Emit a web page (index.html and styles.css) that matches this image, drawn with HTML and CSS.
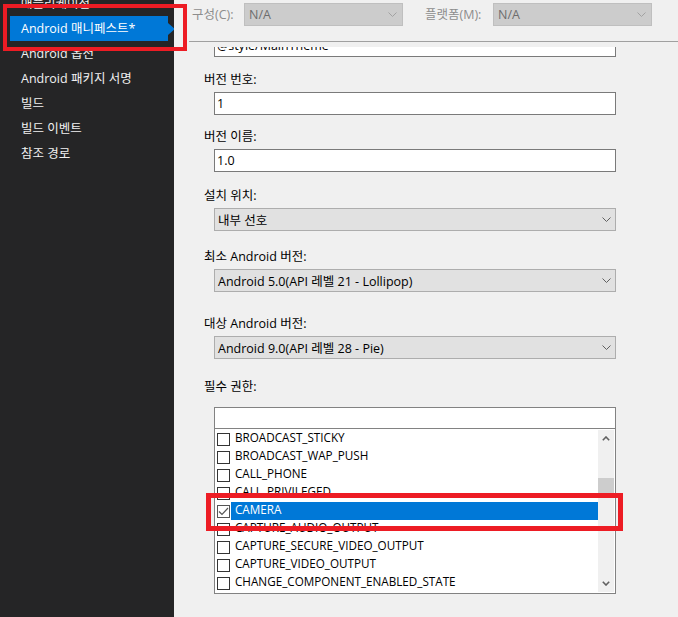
FILE: index.html
```html
<!DOCTYPE html>
<html lang="ko">
<head>
    <meta charset="UTF-8">
    <title>Android 매니페스트</title>
    <link rel="stylesheet" href="styles.css">
</head>
<body>
    <div class="app">
        <nav class="sidebar">
            <ul class="nav-list">
                <li class="nav-item">애플리케이션</li>
                <li class="nav-item active">Android 매니페스트*</li>
                <li class="nav-item">Android 옵션</li>
                <li class="nav-item">Android 패키지 서명</li>
                <li class="nav-item">빌드</li>
                <li class="nav-item">빌드 이벤트</li>
                <li class="nav-item">참조 경로</li>
            </ul>
        </nav>

        <main class="main">
            <div class="toolbar">
                <span class="tb-label">구성(C):</span>
                <div class="combo combo-disabled">
                    <span>N/A</span>
                    <svg class="chevron" width="9" height="5" viewBox="0 0 9 5"><polyline points="0.5,0.5 4.5,4.5 8.5,0.5" /></svg>
                </div>
                <span class="tb-label tb-label-wide">플랫폼(M):</span>
                <div class="combo combo-disabled">
                    <span>N/A</span>
                    <svg class="chevron" width="9" height="5" viewBox="0 0 9 5"><polyline points="0.5,0.5 4.5,4.5 8.5,0.5" /></svg>
                </div>
            </div>
            <div class="divider"></div>

            <div class="viewport">
                <div class="form">
                    <input class="textbox textbox-cut" type="text" value="@style/MainTheme">

                    <div class="field">
                        <label class="field-label">버전 번호:</label>
                        <input class="textbox" type="text" value="1">
                    </div>

                    <div class="field field-sm">
                        <label class="field-label">버전 이름:</label>
                        <input class="textbox" type="text" value="1.0">
                    </div>

                    <div class="field field-md">
                        <label class="field-label">설치 위치:</label>
                        <div class="combo">
                            <span>내부 선호</span>
                            <svg class="chevron" width="9" height="5" viewBox="0 0 9 5"><polyline points="0.5,0.5 4.5,4.5 8.5,0.5" /></svg>
                        </div>
                    </div>

                    <div class="field field-lg">
                        <label class="field-label">최소 Android 버전:</label>
                        <div class="combo">
                            <span>Android 5.0(API 레벨 21 - Lollipop)</span>
                            <svg class="chevron" width="9" height="5" viewBox="0 0 9 5"><polyline points="0.5,0.5 4.5,4.5 8.5,0.5" /></svg>
                        </div>
                    </div>

                    <div class="field field-xl">
                        <label class="field-label">대상 Android 버전:</label>
                        <div class="combo">
                            <span>Android 9.0(API 레벨 28 - Pie)</span>
                            <svg class="chevron" width="9" height="5" viewBox="0 0 9 5"><polyline points="0.5,0.5 4.5,4.5 8.5,0.5" /></svg>
                        </div>
                    </div>

                    <div class="field field-perm">
                        <label class="field-label">필수 권한:</label>
                        <div class="perm-box">
                            <input class="perm-filter" type="text">
                            <div class="perm-body">
                                <ul class="perm-list">
                                    <li class="perm-item"><span class="check"></span><span class="perm-name">BROADCAST_STICKY</span></li>
                                    <li class="perm-item"><span class="check"></span><span class="perm-name">BROADCAST_WAP_PUSH</span></li>
                                    <li class="perm-item"><span class="check"></span><span class="perm-name">CALL_PHONE</span></li>
                                    <li class="perm-item"><span class="check"></span><span class="perm-name">CALL_PRIVILEGED</span></li>
                                    <li class="perm-item selected">
                                        <span class="check checked">
                                            <svg width="11" height="11" viewBox="0 0 11 11"><polyline points="1,5.5 4,8.5 10,2" /></svg>
                                        </span>
                                        <span class="perm-name">CAMERA</span>
                                    </li>
                                    <li class="perm-item"><span class="check"></span><span class="perm-name">CAPTURE_AUDIO_OUTPUT</span></li>
                                    <li class="perm-item"><span class="check"></span><span class="perm-name">CAPTURE_SECURE_VIDEO_OUTPUT</span></li>
                                    <li class="perm-item"><span class="check"></span><span class="perm-name">CAPTURE_VIDEO_OUTPUT</span></li>
                                    <li class="perm-item"><span class="check"></span><span class="perm-name">CHANGE_COMPONENT_ENABLED_STATE</span></li>
                                </ul>
                                <div class="scrollbar">
                                    <div class="scroll-btn">
                                        <svg width="8" height="5" viewBox="0 0 8 5"><polyline points="0.8,4.2 4,1 7.2,4.2" /></svg>
                                    </div>
                                    <div class="scroll-thumb"></div>
                                    <div class="scroll-btn scroll-btn-down">
                                        <svg width="8" height="5" viewBox="0 0 8 5"><polyline points="0.8,0.8 4,4 7.2,0.8" /></svg>
                                    </div>
                                </div>
                            </div>
                        </div>
                    </div>
                </div>
            </div>
        </main>

        <!-- annotation boxes drawn over the screenshot -->
        <div class="mark mark-nav"></div>
        <div class="mark mark-camera"></div>
    </div>
</body>
</html>
```

FILE: styles.css
```css
* {
    box-sizing: border-box;
}

body {
    margin: 0;
    background-color: #f0f0f0;
    font-family: "Open Sans", "Noto Sans CJK KR", sans-serif;
    font-size: 12.5px;
    color: #000000;
    overflow: hidden;
}

.app {
    position: relative;
    display: flex;
    height: 617px;
}

/* Left navigation */
.sidebar {
    flex: none;
    width: 174px;
    background-color: #252526;
    overflow: hidden;
}

.nav-list {
    list-style: none;
    margin: -9px 0 0;
    padding: 0;
}

.nav-item {
    position: relative;
    width: 158px;
    height: 25px;
    margin-left: 10px;
    padding-left: 11px;
    line-height: 25px;
    color: #f1f1f1;
    white-space: nowrap;
}

.nav-item.active {
    background-color: #0078d7;
    color: #ffffff;
}

.nav-item.active::after {
    content: "";
    position: absolute;
    right: -7px;
    top: 7px;
    border-left: 7px solid #0078d7;
    border-top: 6px solid transparent;
    border-bottom: 6px solid transparent;
}

/* Main panel */
.main {
    flex: 1;
    display: flex;
    flex-direction: column;
    min-width: 0;
}

.toolbar {
    display: flex;
    align-items: flex-start;
    height: 41px;
    padding: 3px 0 0 18px;
}

.tb-label {
    width: 52px;
    line-height: 23px;
    color: #8d8d8d;
}

.tb-label-wide {
    width: 68px;
    margin-left: 22px;
}

.divider {
    height: 1px;
    margin-left: 15px;
    background-color: #a0a0a0;
}

.viewport {
    flex: 1;
    margin-top: 5px;
    overflow: hidden;
}

.form {
    padding-left: 30px;
}

/* Controls */
.textbox {
    display: block;
    width: 402px;
    height: 23px;
    margin-left: 10px;
    padding: 0 2px;
    border: 1px solid #7a7a7a;
    background-color: #ffffff;
    font: inherit;
    color: #000000;
    outline: none;
}

.textbox-cut {
    margin-top: -13px;
}

.combo {
    display: flex;
    align-items: center;
    justify-content: space-between;
    width: 402px;
    height: 23px;
    margin-left: 10px;
    padding: 0 4px 0 3px;
    border: 1px solid #adadad;
    background-color: #e1e1e1;
    white-space: nowrap;
}

.chevron polyline {
    fill: none;
    stroke: #606060;
    stroke-width: 1;
}

.combo-disabled {
    width: 159px;
    margin-left: 0;
    padding: 0 5px 0 4px;
    border-color: #bfbfbf;
    background-color: #cccccc;
    color: #6d6d6d;
}

.combo-disabled .chevron polyline {
    stroke: #a2a2a2;
}

/* Fields */
.field {
    margin-top: 15px;
}

.field-sm {
    margin-top: 14px;
}

.field-md {
    margin-top: 16px;
}

.field-lg {
    margin-top: 18px;
}

.field-xl {
    margin-top: 24px;
}

.field-perm {
    margin-top: 20px;
}

.field-label {
    display: block;
    line-height: 16px;
    margin-bottom: 4px;
}

.field-perm .field-label {
    margin-bottom: 12px;
}

/* Permission list */
.perm-box {
    width: 402px;
    margin-left: 10px;
    border: 1px solid #828282;
    background-color: #ffffff;
}

.perm-filter {
    display: block;
    width: 100%;
    height: 21px;
    border: none;
    border-bottom: 1px solid #828282;
    outline: none;
    font: inherit;
}

.perm-body {
    display: flex;
    padding: 1px 1px 1px 2px;
}

.perm-list {
    flex: 1;
    list-style: none;
    margin: 0;
    padding: 0;
    font-size: 11.7px;
}

.perm-item {
    display: flex;
    align-items: center;
    height: 18px;
    white-space: nowrap;
}

.check {
    display: flex;
    align-items: center;
    justify-content: center;
    flex: none;
    width: 13px;
    height: 13px;
    margin-right: 1px;
    border: 1px solid #333333;
    background-color: #ffffff;
}

.check.checked {
    border-color: #555555;
}

.check svg polyline {
    fill: none;
    stroke: #555555;
    stroke-width: 1.2;
}

.perm-name {
    flex: 1;
    height: 18px;
    padding-left: 4px;
    line-height: 15px;
}

.perm-item.selected .perm-name {
    background-color: #0078d7;
    color: #ffffff;
}

.scrollbar {
    display: flex;
    flex-direction: column;
    width: 16px;
    background-color: #f0f0f0;
}

.scroll-btn {
    display: flex;
    align-items: center;
    justify-content: center;
    height: 17px;
}

.scroll-btn svg polyline {
    fill: none;
    stroke: #606060;
    stroke-width: 1.6;
}

.scroll-btn-down {
    margin-top: auto;
}

.scroll-thumb {
    height: 16px;
    margin-top: 31px;
    background-color: #cdcdcd;
}

/* Red annotation boxes */
.mark {
    position: absolute;
    border: 4px solid #ed1c24;
    pointer-events: none;
}

.mark-nav {
    left: 3px;
    top: 4px;
    width: 184px;
    height: 47px;
}

.mark-camera {
    left: 206px;
    top: 493px;
    width: 417px;
    height: 38px;
    border-width: 5px;
}
```
